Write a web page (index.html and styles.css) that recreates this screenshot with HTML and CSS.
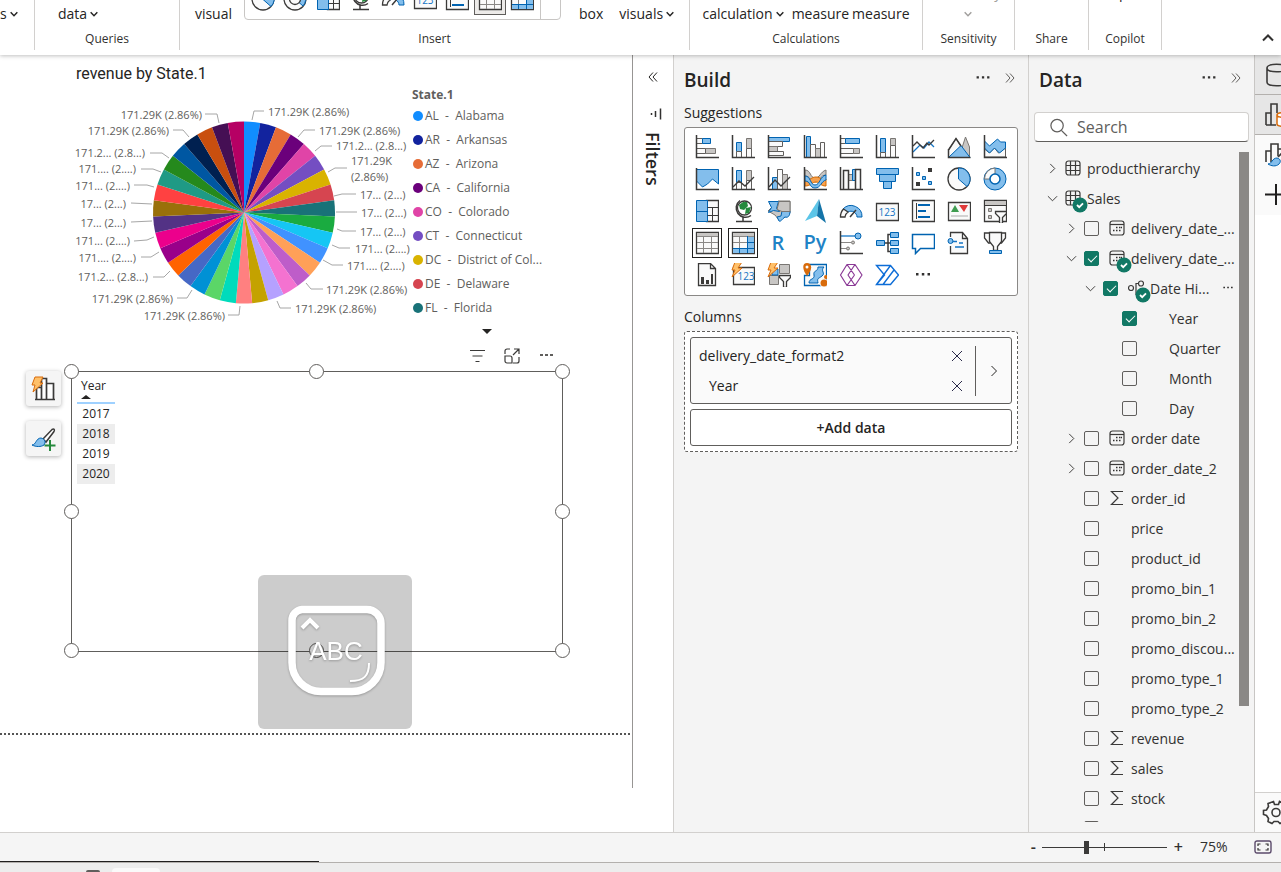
FILE: index.html
```html
<!DOCTYPE html>
<html lang="en">
<head>
<meta charset="utf-8">
<title>Report editor</title>
<link rel="stylesheet" href="styles.css">
</head>
<body>
<svg class="sprite" aria-hidden="true">
  <symbol id="i-sbar" viewBox="0 0 24 24"><path class="g" d="M10.5 13.5h10v5h-10z"/><path class="w" d="M1.500 13.500h9v5h-9zM1.500 3.500h6v5h-6z"/><path class="b" d="M7.500 3.500h8v5h-8z"/><path class="k" d="M1.500 0v22.500H24"/></symbol>
  <symbol id="i-scol" viewBox="0 0 24 24"><path class="b" d="M5.500 7.500h5v9h-5z"/><path class="g" d="M15.500 3.500h5v10h-5z"/><path class="w" d="M5.500 16.500h5v6h-5zM15.500 13.500h5v9h-5z"/><path class="k" d="M1.500 0v22.500H24"/></symbol>
  <symbol id="i-cbar" viewBox="0 0 24 24"><path class="b" d="M1.500 2.500h21v4h-21z"/><path class="w" d="M1.500 6.500h14v5h-14z"/><path class="g" d="M1.500 11.500h9v5h-9z"/><path class="w" d="M1.500 16.500h15v4h-15z"/><path class="k" d="M1.500 0v22.500H24"/></symbol>
  <symbol id="i-ccol" viewBox="0 0 24 24"><path class="b" d="M3.500 1.500h4v21h-4z"/><path class="w" d="M7.500 9.500h5v13h-5z"/><path class="g" d="M12.500 13.500h5v9h-5z"/><path class="w" d="M17.500 7.500h4v15h-4z"/><path class="k" d="M1.500 0v22.500H24"/></symbol>
  <symbol id="i-pbar" viewBox="0 0 24 24"><path class="w" d="M1.500 3.500h5v5h-5zM1.500 13.500h13v5h-13z"/><path class="b" d="M6.500 3.500h14v5h-14z"/><path class="g" d="M14.500 13.500h6v5h-6z"/><path class="k" d="M1.500 0v22.500H24"/></symbol>
  <symbol id="i-pcol" viewBox="0 0 24 24"><path class="b" d="M5.500 3.500h5v14h-5z"/><path class="g" d="M15.500 3.500h5v7h-5z"/><path class="w" d="M5.500 17.500h5v5h-5zM15.500 10.500h5v12h-5z"/><path class="k" d="M1.500 0v22.500H24"/></symbol>
  <symbol id="i-line" viewBox="0 0 24 24"><path class="bl" d="M2 17l7-7 4 3 5-6 5 5"/><path class="kl" d="M2 11l4-4 6 6 4-5 2 2 5-5"/><path class="k" d="M1.500 0v22.500H24"/></symbol>
  <symbol id="i-area" viewBox="0 0 24 24"><path class="g" d="M12 22L18.500 2l4 10v10z"/><path class="w" d="M1.500 15L9 3.500l9 14V22H1.500z"/><path class="b" d="M1.500 22.500L14 10.500l9 12z"/><path class="k" d="M1.500 14v8.500h22M1.500 15L9 3.500l5 7.500"/></symbol>
  <symbol id="i-sarea" viewBox="0 0 24 24"><path class="w" d="M1.500 14l5 4 5-5 4 5 7-5v9h-21z"/><path class="b" d="M1.500 6l5 5 8-7 3 3h5v6l-6 5-5-5-5 5-5-5z"/><path class="k" d="M1.500 0v22.500H24"/></symbol>
  <symbol id="i-parea" viewBox="0 0 24 24"><path class="b" d="M1.500 2.500h22V17l-6-5-5 5-5 3-6-6z"/><path class="k" d="M1.500 1v21.500H24"/></symbol>
  <symbol id="i-lscol" viewBox="0 0 24 24"><path class="b" d="M5.500 3.500h5v12h-5z"/><path class="g" d="M15.500 3.500h5v10h-5z"/><path class="w" d="M5.500 15.500h5v7h-5zM15.500 13.500h5v9h-5z"/><path class="kl" d="M2 20l6-6 6 5 9-9"/><path class="k" d="M1.500 0v22.500H24"/></symbol>
  <symbol id="i-lccol" viewBox="0 0 24 24"><path class="b" d="M5.500 10.500h5v12h-5z"/><path class="w" d="M10.500 2.500h5v20h-5z"/><path class="g" d="M15.500 7.500h5v15h-5z"/><path class="kl" d="M2 20l6-7 6 6 9-9"/><path class="k" d="M1.500 0v22.500H24"/></symbol>
  <symbol id="i-ribbon" viewBox="0 0 24 24"><path class="g" d="M2 3c6 0 5 8 10 8S17 5 23 3v5c-6 0-6 7-11 7S8 9 2 9z"/><path d="M2 13c7 0 6-3 11-3s5 4 10 2v7c-6 0-6-4-10-4s-5 4-11 4z" fill="#f6a04d" stroke="#d56a00"/><path class="b" d="M2 9c6 0 5 9 10 9S17 9 23 8v5c-5 1-5 8-11 8S8 14 2 14z"/><path class="k" d="M1.500 0v22.500H24"/></symbol>
  <symbol id="i-fall" viewBox="0 0 24 24"><path class="g" d="M9.500 7.500h4v6h-4z"/><path class="b" d="M13.500 2.500h3v11h-3z"/><path class="w" d="M4.500 3.500h5v19h-5zM16.500 2.500h5v20h-5z"/><path class="k" d="M1.500 0v22.500H24M16.500 22V2.500h5V22M4.500 22V3.500h5V22"/></symbol>
  <symbol id="i-funnel" viewBox="0 0 24 24"><path class="b" d="M1.500 1.500h22v6h-22zM4.500 7.500h16v7h-16zM8.500 14.500h8v7h-8z"/></symbol>
  <symbol id="i-scatter" viewBox="0 0 24 24"><path class="b" d="M5.500 5.500h3v3h-3zM11.500 9.500h3v3h-3zM17.500 14.500h3v3h-3z"/><path d="M17 1h4v4h-4zM5 15h4v4H5z" fill="#3b3a39"/><path class="k" d="M1.500 0v22.500H24"/></symbol>
  <symbol id="i-pie" viewBox="0 0 24 24"><circle class="wk" cx="12" cy="12" r="11"/><path class="b" d="M11.500 1v11l8.500 7.500A11 11 0 0 0 11.500 1z"/></symbol>
  <symbol id="i-donut" viewBox="0 0 24 24"><circle class="b" cx="12" cy="12" r="11"/><path class="wg" d="M12 1A11 11 0 0 0 1.500 12H7a5 5 0 0 1 5-5z"/><circle cx="12" cy="12" r="5" fill="#fff" stroke="#0063b1" stroke-width="1.500"/></symbol>
  <symbol id="i-donut2" viewBox="0 0 24 24"><circle class="wk" cx="12" cy="12" r="11"/><path class="b" d="M12 1a11 11 0 0 1 8 18l-4-3.500A5 5 0 0 0 12 7z"/><circle class="wk" cx="12" cy="12" r="5.500"/></symbol>
  <symbol id="i-tree" viewBox="0 0 24 24"><path class="wk" d="M11.500 1.500h12v21h-12z"/><path class="b" d="M1.500 1.500h11v21h-11zM1.500 12.500h11"/><path class="k1" d="M12.500 8.500h11M12.500 16.500h11M17.500 8.500v14"/></symbol>
  <symbol id="i-globe" viewBox="0 0 24 24"><circle cx="13.500" cy="9" r="7" fill="#fff" stroke="#3b3a39" stroke-width="1.300"/><path d="M8 6l4-3 4 0 1 4-4 4-4-1zM15 9l5-1-2 6-4 1z" fill="#258a3d"/><path class="k" d="M9 1.500A9 9 0 1 0 20 16.500M12 18v4M5 22.500h16"/></symbol>
  <symbol id="i-map" viewBox="0 0 24 24"><path class="g" d="M11 2h12v12l-5 4-6 3-4-5-7-4 5-5z"/><path class="b" d="M1.500 2.500h10l-2 7 3 3-6-1-5 2 3-5zM15 12l8 0c0 5-2 7-5 6-3 2-4 5-6 4l-2-4 4-1z"/><path class="g" d="M12 2.500h11v10h-8l-5-2z"/></symbol>
  <symbol id="i-arrow" viewBox="0 0 24 24"><path d="M16 0L2 22l12-5z" fill="#5cc5e8"/><path d="M16 0l7 24-9-7z" fill="#1474a8"/></symbol>
  <symbol id="i-gauge" viewBox="0 0 24 24"><path class="b" d="M4 10A11 11 0 0 1 23 18h-5a6 6 0 0 0-9-5z"/><path class="wk" d="M4.500 10A11 11 0 0 0 1.500 18H6a7 7 0 0 1 3-5z"/><path class="k" d="M11 18l6-7"/></symbol>
  <symbol id="i-card" viewBox="0 0 24 24"><path class="wk" d="M1.500 4.500h22v17h-22z"/><text x="12" y="17" text-anchor="middle" class="card-num">123</text></symbol>
  <symbol id="i-mcard" viewBox="0 0 24 24"><path class="wk" d="M1.500 1.500h22v21h-22z"/><path class="k1" d="M5.500 4v16"/><path stroke="#0063b1" stroke-width="2" d="M7 6h12M7 12h8M7 18h12"/></symbol>
  <symbol id="i-kpi" viewBox="0 0 24 24"><path class="wk" d="M1.500 3.500h22v18h-22z"/><path d="M4 13l4-7 4 7z" fill="#3f9c50"/><path d="M12 6h9l-4 7z" fill="#e03a3a"/><path d="M4 17h17" stroke="#aaa"/></symbol>
  <symbol id="i-slicer" viewBox="0 0 24 24"><path class="wk" d="M1.500 1.500h22v21h-22z"/><path d="M2 2h21v4H2z" fill="#c8c6c4"/><path class="k1" d="M2 6.500h21"/><path class="g" d="M5.500 9.500h3v3h-3zM5.500 16.500h3v3h-3z"/><path class="wk" d="M12.500 12.500h11v2l-4 4v6h-3v-6l-4-4z"/></symbol>
  <symbol id="i-table" viewBox="0 0 24 24"><path class="wk" d="M1.500 1.500h22v21h-22z"/><path d="M2 2h21v3H2z" fill="#c8c6c4"/><path class="gl" d="M2 5.500h21M2 11.500h21M2 17.500h21M8.500 5v17M16.500 5v17"/><path class="k1" d="M1.500 1.500h22v21h-22z"/></symbol>
  <symbol id="i-matrix" viewBox="0 0 24 24"><path class="wk" d="M1.500 1.500h22v21h-22z"/><path d="M2 2h21v3H2z" fill="#c8c6c4"/><path d="M16 5h7v17H2v-5h14z" fill="#83beec"/><path class="gl" d="M2 5.500h21M2 11.500h14M8.500 5v12M16.500 5"/><path d="M1.500 17.500h22M16.500 5v17M16 11.500h7M8.500 17v5" stroke="#0063b1"/><path class="k1" d="M1.500 22.500v-21h22v21z"/></symbol>
  <symbol id="i-r" viewBox="0 0 24 24"><text x="11" y="19" text-anchor="middle" class="lang">R</text></symbol>
  <symbol id="i-py" viewBox="0 0 24 24"><text x="12" y="18" text-anchor="middle" class="lang">Py</text></symbol>
  <symbol id="i-inf" viewBox="0 0 24 24"><path class="bl" d="M2 5h14"/><circle class="b" cx="19" cy="5" r="3"/><path class="gl" d="M2 11.500h10M2 17.500h6"/><circle class="g" cx="14" cy="11.500" r="1.500"/><circle class="g" cx="9" cy="17.500" r="1.500"/><path class="k" d="M1.500 0v22.500H24"/></symbol>
  <symbol id="i-decomp" viewBox="0 0 24 24"><path class="k" d="M9 12h6M15 3.500h-2v17h2"/><path class="b" d="M1.500 9.500h8v5h-8zM15.500 1.500h8v5h-8zM15.500 9.500h8v5h-8zM15.500 17.500h8v5h-8z"/></symbol>
  <symbol id="i-qa" viewBox="0 0 24 24"><path d="M1.500 3.500h22v14h-14l-5 5v-5h-3z" fill="#fff" stroke="#0063b1" stroke-width="1.500"/></symbol>
  <symbol id="i-narr" viewBox="0 0 24 24"><path class="wk" d="M3.500 6V1.500h12l5 6v15h-17V15M15.500 1.500v6h5"/><circle class="b" cx="3.500" cy="10" r="2.500"/><path class="bl" d="M6 10.500h4M8 16h9M12 12h4"/></symbol>
  <symbol id="i-trophy" viewBox="0 0 24 24"><path class="wk" d="M6.500 2H1.500v5l4 5h2M17.500 2h5v5l-4 5h-2"/><path class="wk" d="M6.500 1.500h12v9l-4 5v4h-4v-4l-4-5z"/><path class="b" d="M6.500 19.500h12v3h-12z"/></symbol>
  <symbol id="i-prep" viewBox="0 0 24 24"><path class="wk" d="M3.500 0.500h12l5 5v17h-17zM15.500 0.500v5h5"/><path d="M6 14h3v7H6zM11 17h3v4h-3zM16 11h2v10h-2z" fill="#3b3a39"/></symbol>
  <symbol id="i-card2" viewBox="0 0 24 24"><path class="wk" d="M2.500 4.500h21v17h-21z"/><text x="15" y="17" text-anchor="middle" class="card-num">123</text><path class="bolt" d="M4-1h7L7 5h4L1 14l3-7H1z"/></symbol>
  <symbol id="i-slicer2" viewBox="0 0 24 24"><path class="g" d="M12.500 1.500h10v9h-10zM2.500 12.500h9v9h-9z"/><path class="b" d="M5 6h6v6H5z"/><path class="bolt" d="M4-1h7L7 5h4L1 14l3-7H1z"/><path class="wk" d="M12.500 12.500h11v2l-4 4v6h-3v-6l-4-4z"/></symbol>
  <symbol id="i-azmap" viewBox="0 0 24 24"><path class="wb" d="M1.500 22.500v-10h5v-11h17v21z"/><path d="M15 4h6c-4 4 2 6-2 9s-5 2-4 7H6c0-5 6-3 5-8s4-3 4-8z" fill="#83beec" stroke="#0063b1"/><path d="M4 13C-1 6-1 0 4 0s6 6 0 13z" fill="#d86b0b"/><circle cx="4" cy="4" r="1.500" fill="#fff"/><circle cx="21" cy="20" r="4.500" fill="#fff"/><circle cx="21" cy="20" r="3.500" fill="#d86b0b"/><circle cx="23" cy="14" r="2" fill="#d86b0b"/></symbol>
  <symbol id="i-apps" viewBox="0 0 24 24"><path d="M8 1.500h8l7 10.500-7 10.500H8L1.500 12zM8 1.500l7.500 10.500M16 1.500L9 12l7 10.500M8 22.500L15.500 12" fill="none" stroke="#8b3a96" stroke-width="1.200" stroke-linejoin="round"/></symbol>
  <symbol id="i-flow" viewBox="0 0 24 24"><path d="M1.500 2.500h14l8 9.500-8 9.500h-14l8-9.500zM15.500 2.500l-14 19M19 7L8 21.500" fill="none" stroke="#0d6dd7" stroke-width="1.400"/></symbol>
  <symbol id="i-dots" viewBox="0 0 24 24"><path d="M5 10h2.500v2.500H5zM10.800 10h2.500v2.500h-2.500zM16.500 10H19v2.500h-2.500z" fill="#323130"/></symbol>
  <symbol id="i-down" viewBox="0 0 12 12"><path d="M1 3.500l5 5 5-5" fill="none" stroke="currentColor"/></symbol>
  <symbol id="i-downb" viewBox="0 0 12 12"><path d="M1 3.500l5 5 5-5" fill="none" stroke="currentColor" stroke-width="2.200"/></symbol>
  <symbol id="i-right" viewBox="0 0 12 12"><path d="M3.500 1l5 5-5 5" fill="none" stroke="currentColor"/></symbol>
  <symbol id="i-close" viewBox="0 0 12 12"><path d="M1 1l10 10M11 1L1 11" fill="none" stroke="#2b2b4a"/></symbol>
  <symbol id="i-dbl" viewBox="0 0 12 12"><path d="M2 1.500L6 6l-4 4.500M6 1.500L10 6l-4 4.500" fill="none" stroke="currentColor"/></symbol>
  <symbol id="i-grid" viewBox="0 0 16 16"><rect x="1" y="1" width="14" height="14" rx="2.500" class="ol"/><path class="ol" d="M1 5.500h14M1 10.500h14M5.500 1v14M10.500 1v14"/></symbol>
  <symbol id="i-cal" viewBox="0 0 16 16"><rect x="1" y="1" width="14" height="14" rx="2.500" class="ol"/><path class="ol" d="M1 4.500h14"/><path d="M7 7.500h1.500M10 7.500h1.500M13 7.500h-1M4 10.500h1.500M7 10.500h1.500M10 10.500h1.500" stroke="#323130" stroke-width="1.400"/></symbol>
  <symbol id="i-hier" viewBox="0 0 16 16"><circle class="ol" cx="3" cy="8" r="2.500"/><circle class="ol" cx="13" cy="3.500" r="2.500"/><path class="ol" d="M10.500 3.500H8v11h3"/></symbol>
  <symbol id="i-sum" viewBox="0 0 16 16"><path class="ol" d="M14 1.500H2.500L9 8l-6.500 6.500H14"/></symbol>
  <symbol id="i-ok" viewBox="0 0 16 16"><circle cx="8" cy="8" r="7.500" fill="#117865"/><path d="M5 8l2.200 2.200L11 6.300" fill="none" stroke="#fff" stroke-width="1.800"/></symbol>
</svg>

<header class="ribbon">
  <section class="group"><div class="cmds"><button>s<svg class="chev"><use href="#i-downb"/></svg></button></div><div class="cap">&nbsp;</div></section>
  <section class="group"><div class="cmds"><button>data<svg class="chev"><use href="#i-downb"/></svg></button></div><div class="cap">Queries</div></section>
  <section class="group insert">
    <div class="cmds">
      <button>visual</button>
      <div class="gallery">
        <button aria-label="Pie"><svg class="ico"><use href="#i-pie"/></svg></button>
        <button aria-label="Donut"><svg class="ico"><use href="#i-donut2"/></svg></button>
        <button aria-label="Treemap"><svg class="ico"><use href="#i-tree"/></svg></button>
        <button aria-label="Map"><svg class="ico"><use href="#i-globe"/></svg></button>
        <button aria-label="Gauge"><svg class="ico"><use href="#i-gauge"/></svg></button>
        <button aria-label="Card"><svg class="ico"><use href="#i-card"/></svg></button>
        <button aria-label="Multi-row card"><svg class="ico"><use href="#i-mcard"/></svg></button>
        <button class="on" aria-label="Table"><svg class="ico"><use href="#i-table"/></svg></button>
        <button aria-label="Matrix"><svg class="ico"><use href="#i-matrix"/></svg></button>
      </div>
      <button class="box">box</button>
      <button>visuals<svg class="chev"><use href="#i-downb"/></svg></button>
    </div>
    <div class="cap">Insert</div>
  </section>
  <section class="group"><div class="cmds calc"><button>calculation<svg class="chev"><use href="#i-downb"/></svg></button><button>measure</button><button>measure</button></div><div class="cap">Calculations</div></section>
  <section class="group"><div class="cmds"><button class="tall off">Sensitivity<svg class="chev"><use href="#i-downb"/></svg></button></div><div class="cap">Sensitivity</div></section>
  <section class="group"><div class="cap">Share</div></section>
  <section class="group"><div class="cmds"><button class="tall">Copilot<span class="chev"></span></button></div><div class="cap">Copilot</div></section>
  <button class="collapse" aria-label="Collapse ribbon"><svg viewBox="0 0 12 12"><path d="M1 8.500l5-5 5 5" fill="none" stroke="#323130" stroke-width="2"/></svg></button>
</header>

<main class="work">
  <section class="report">
    <div class="page">
      <article class="pie">
        <h2>revenue by State.1</h2>
        <svg class="chart" viewBox="76 100 332 226" role="img" aria-label="Pie chart of revenue by State.1">
          <g id="slices"></g><g id="leaders"></g><g id="labels"></g>
        </svg>
        <div class="legend">
          <h3>State.1</h3>
          <ul>
            <li class="c1">AL  -  Alabama</li><li class="c2">AR  -  Arkansas</li><li class="c3">AZ  -  Arizona</li>
            <li class="c4">CA  -  California</li><li class="c5">CO  -  Colorado</li><li class="c6">CT  -  Connecticut</li>
            <li class="c7">DC  -  District of Col...</li><li class="c8">DE  -  Delaware</li><li class="c9">FL  -  Florida</li>
          </ul>
          <button class="more" aria-label="Next legend items"></button>
        </div>
      </article>

      <div class="vis-tools">
        <button aria-label="Filters"><svg viewBox="0 0 16 16"><path class="ol" d="M1 2.500h15M3.500 8h10M6.500 13.500h4"/></svg></button>
        <button aria-label="Focus mode"><svg viewBox="0 0 16 16"><path class="ol" d="M6 1H3a2 2 0 0 0-2 2v3M10 1h5v5M15 1L9 7M15 9v4a2 2 0 0 1-2 2H9M1 8h5a2 2 0 0 1 2 2v5H3a2 2 0 0 1-2-2z"/></svg></button>
        <button aria-label="More options"><svg viewBox="0 0 16 16"><path d="M1 6h3v2H1zM6 6h3v2H6zM11 6h3v2h-3z" fill="#605e5c"/></svg></button>
      </div>
      <div class="side-tools">
        <button aria-label="Build visual"><svg viewBox="0 0 26 26"><path d="M5.500 23.500v-12h5v12M10.500 23.500V2.500h5v21M15.500 23.500v-16h7v16M4 23.500h20" fill="#fff" stroke="#3b3a39" stroke-width="1.700"/><path class="bolt" d="M4 1h8L9 7h3L2 16l2-7H1z"/></svg></button>
        <button aria-label="Format visual"><svg viewBox="0 0 26 26"><path d="M12 13L21 3.500c2-1 3 0 2 2L15 16z" fill="#fff" stroke="#3b3a39" stroke-width="1.500"/><path class="b" d="M1 19c4 0 4-7 9-7 4 1 5 4 3 7-3 2-8 2-12 0z"/><path d="M19 14v11M13.500 19.500h11" stroke="#258a3d" stroke-width="2"/></svg></button>
      </div>

      <article class="matrix">
        <table>
          <thead><tr><th>Year<i class="up"></i></th></tr></thead>
          <tbody><tr><td>2017</td></tr><tr><td>2018</td></tr><tr><td>2019</td></tr><tr><td>2020</td></tr></tbody>
        </table>
        <i class="h tl"></i><i class="h tc"></i><i class="h tr"></i><i class="h ml"></i><i class="h mr"></i><i class="h bl-h"></i><i class="h bc"></i><i class="h br"></i>
      </article>

      <div class="osd">
        <svg viewBox="0 0 154 154" role="img" aria-label="Caps lock indicator">
          <g class="shade"><path d="M44 34.500h65a14 14 0 0 1 14 14v39a29 29 0 0 1-29 29H63a29 29 0 0 1-29-29v-42a11 11 0 0 1 10-11z" stroke-width="7.500"/><path d="M44 53l8-8 8 8" stroke-width="4"/><path d="M111 88c0 13-5 18-19 18" stroke-width="2"/></g>
          <text x="78" y="85" text-anchor="middle">ABC</text>
        </svg>
      </div>
    </div>
  </section>

  <aside class="filters">
    <button aria-label="Expand filters"><svg class="dbl flip"><use href="#i-dbl"/></svg></button>
    <svg class="fico" viewBox="0 0 12 12"><path d="M1.500 5v2M5.500 3v6M10.500 .5v11" stroke="#323130" stroke-width="1.500"/></svg>
    <h2>Filters</h2>
  </aside>

  <aside class="build">
    <div class="head"><h1>Build</h1><button aria-label="More"><svg class="ell"><use href="#i-dots"/></svg></button><button aria-label="Collapse"><svg class="dbl"><use href="#i-dbl"/></svg></button></div>
    <h2>Suggestions</h2>
    <div class="types" id="types"></div>
    <h2 class="second">Columns</h2>
    <div class="well">
      <div class="field">
        <div class="names">
          <div><span>delivery_date_format2</span><button aria-label="Remove delivery_date_format2"><svg class="x"><use href="#i-close"/></svg></button></div>
          <div class="sub"><span>Year</span><button aria-label="Remove Year"><svg class="x"><use href="#i-close"/></svg></button></div>
        </div>
        <button class="open" aria-label="Field options"><svg class="x"><use href="#i-right"/></svg></button>
      </div>
      <button class="add">+Add data</button>
    </div>
  </aside>

  <aside class="data">
    <div class="head"><h1>Data</h1><button aria-label="More"><svg class="ell"><use href="#i-dots"/></svg></button><button aria-label="Collapse"><svg class="dbl"><use href="#i-dbl"/></svg></button></div>
    <label class="search"><svg viewBox="0 0 20 20"><circle cx="8.500" cy="8" r="6.500" fill="none" stroke="#605e5c" stroke-width="1.300"/><path d="M13 13l6 6" stroke="#605e5c" stroke-width="1.300"/></svg><input type="text" placeholder="Search" aria-label="Search"></label>
    <div class="scroll">
      <ul class="tree" id="tree"></ul>
      <div class="bar"></div>
    </div>
  </aside>

  <nav class="rail">
    <button class="on" aria-label="Data"><svg viewBox="0 0 24 24"><path class="ol2" d="M2 5v14c0 5 19 5 19 0V5c0-5-19-5-19 0c0 5 19 5 19 0"/></svg></button>
    <button class="on" aria-label="Build"><svg viewBox="0 0 24 24"><path class="ol2" d="M1 22V10h5V1h6v9M1 22h10M6 22V10"/><path d="M12 12v9c0 3 12 3 12 0v-9c0-3-12-3-12 0c0 3 12 3 12 0" fill="#fff" stroke="#d86b0b" stroke-width="1.500"/></svg></button>
    <button aria-label="Format"><svg viewBox="0 0 24 24"><path class="ol2" d="M1 19V8h5v11M6 8V1h7v12M13 6h5"/><path class="b" d="M3 21c4 0 4-6 9-6 4 1 4 4 2 6-3 3-8 2-11 0z"/><path class="ol2" d="M13 14l8-8"/></svg></button>
    <button aria-label="Add"><svg viewBox="0 0 24 24"><path d="M11 1v21M0 11.500h24" stroke="#201f1e" stroke-width="2"/></svg></button>
    <button class="gear" aria-label="Settings"><svg viewBox="0 0 26 26"><path class="ol2" d="M10.500 1.500l1 3h4l1-3 4 2-.500 3 2.500 3.500 3 .500v4l-3 1-2 3 .500 3-4 2-2-2h-4l-2 2-4-2 .500-3-2-3-3-1v-4l3-.500 2-3.500-.500-3z"/><circle class="ol2" cx="13" cy="12.500" r="4"/></svg></button>
  </nav>
</main>

<footer class="status">
  <button aria-label="Zoom out">-</button>
  <div class="zoom"><input type="range" min="0" max="100" value="35" aria-label="Zoom"></div>
  <button aria-label="Zoom in">+</button>
  <output>75%</output>
  <button class="fit" aria-label="Fit to page"><svg viewBox="0 0 18 14"><rect x="1" y="1" width="16" height="12" rx="2" fill="none" stroke="#5b4a6b" stroke-width="1.400"/><path d="M4 6V4h2.500M11.500 4H14v2M14 8v2h-2.500M6.500 10H4V8" fill="none" stroke="#323130" stroke-width="1.200"/></svg></button>
</footer>
<div class="taskbar"><i class="avatar"></i><i class="tab"></i></div>
<script src="app.js"></script>
</body>
</html>
```
FILE: styles.css
```css
* { box-sizing: border-box; }
body { margin: 0; height: 100vh; display: flex; flex-direction: column; overflow: hidden; background: #fff; color: #252423; font: 14px/20px "Open Sans", "Noto Sans", sans-serif; }
h1, h2, h3, ul { margin: 0; padding: 0; font-weight: 400; list-style: none; }
button { margin: 0; padding: 0; border: 0; background: none; color: inherit; font: inherit; display: flex; align-items: center; }
svg { display: block; flex: none; overflow: visible; }
.sprite { display: none; }

/* icon paint */
.k { fill: none; stroke: #3b3a39; stroke-width: 1.5; }
.k1 { fill: none; stroke: #3b3a39; }
.kl { fill: none; stroke: #3b3a39; stroke-width: 1.3; }
.bl { fill: none; stroke: #1474c4; stroke-width: 1.3; }
.gl { fill: none; stroke: #8a8886; }
.b { fill: #83beec; stroke: #0063b1; }
.g { fill: #c8c6c4; stroke: #797673; }
.w { fill: #fafafa; stroke: #605e5c; }
.wk { fill: #fafafa; stroke: #3b3a39; stroke-width: 1.3; }
.wg { fill: #fafafa; stroke: #797673; }
.wb { fill: #fafafa; stroke: #0063b1; stroke-width: 1.3; }
.bolt { fill: #ffc069; stroke: #d86b0b; }
.ol { fill: none; stroke: #3b3a39; stroke-width: 1.2; }
.ol2 { fill: none; stroke: #3b3a39; stroke-width: 1.6; }
.card-num { font: 10px "Open Sans", sans-serif; fill: #1474c4; }
.lang { font: 600 20px "Open Sans", sans-serif; fill: #1f83c6; }
.ico { width: 24px; height: 24px; }
.chev { width: 8px; height: 8px; margin-left: 3px; }
.x { width: 12px; height: 12px; }
.dbl { width: 12px; height: 12px; color: #605e5c; }
.flip { transform: scaleX(-1); color: #252423; }
.ell { width: 22px; height: 22px; }

/* ribbon */
.ribbon { flex: none; height: 55px; display: grid; grid-template-columns: 35px 145px 510px 233px 92px 74px 73px 1fr; background: #fff; overflow: hidden; box-shadow: 0 1px 4px rgba(0,0,0,.25); z-index: 2; }
.group { display: flex; flex-direction: column; justify-content: flex-end; align-items: center; height: 50px; border-right: 1px solid #d2d0ce; }
.cmds { display: flex; align-items: flex-end; justify-content: center; }
.group:first-child .cmds { align-self: flex-start; }
.group:nth-child(2) .cmds { margin-right: 58px; }
.cap { font-size: 12px; line-height: 18px; margin: 6px 0 2px; color: #323130; }
.insert .cmds { gap: 12px; align-self: stretch; }
.insert .box { margin: 0 4px 0 6px; }
.gallery { display: flex; justify-content: space-between; align-items: flex-end; height: 60px; width: 317px; padding: 0 22px 4px 2px; margin-bottom: 4px; border: 1px solid #c8c6c4; border-radius: 4px; background: linear-gradient(90deg, transparent 295px, #c8c6c4 295px, #c8c6c4 296px, transparent 296px); }
.gallery button { padding: 3px; border: 1px solid transparent; }
.gallery .on { background: #edebe9; border-color: #605e5c; }
.calc { gap: 3px; }
.calc button:first-child { margin-right: 5px; }
.tall { flex-direction: column; gap: 9px; line-height: 16px; padding-bottom: 6px; }
.tall .chev { margin: 0; }
.off { color: #a19f9d; }
.collapse { justify-self: end; align-self: end; width: 12px; margin: 0 7px 11px 0; }

/* work area */
.work { flex: 1; min-height: 0; display: flex; }
.report { flex: 1; min-width: 0; padding-bottom: 44px; }
.page { position: relative; height: 100%; border-right: 1px solid #979593; }
.page::after { content: ""; position: absolute; left: 0; right: 2px; top: 678px; border-top: 2px dotted #555; }
.pie { position: absolute; left: 76px; top: 9px; display: grid; grid-template-columns: 332px 150px; column-gap: 4px; }
.pie h2 { grid-column: 1 / 3; font: 400 16px/20px Roboto, sans-serif; color: #252423; }
.chart { width: 332px; height: 226px; margin-top: 16px; font-size: 11px; }
.chart text { fill: #605e5c; }
.chart polyline { fill: none; stroke: #a6a6a6; }
.legend { color: #605e5c; font-size: 12px; }
.legend h3 { font-weight: 700; font-size: 12px; line-height: 20px; margin-top: 1px; }
.legend ul { margin: -1px 0 9px; }
.legend li { display: flex; align-items: center; gap: 2px; height: 24px; white-space: pre; }
.legend li::before { content: ""; width: 10px; height: 10px; margin-left: 1px; border-radius: 50%; background: currentColor; }
.legend .c1::before { background: #118dff; }
.legend .c2::before { background: #12239e; }
.legend .c3::before { background: #e66c37; }
.legend .c4::before { background: #6b007b; }
.legend .c5::before { background: #e044a7; }
.legend .c6::before { background: #744ec2; }
.legend .c7::before { background: #d9b300; }
.legend .c8::before { background: #d64550; }
.legend .c9::before { background: #197278; }
.more { margin: 0 auto; border: 5px solid transparent; border-top-color: #252423; border-bottom: 0; }

.vis-tools { position: absolute; left: 469px; top: 293px; display: flex; gap: 19px; }
.vis-tools svg { width: 16px; height: 16px; }
.side-tools { position: absolute; left: 26px; top: 316px; display: grid; gap: 15px; }
.side-tools button { width: 35px; height: 35px; justify-content: center; border-radius: 3px; background: #f5f5f5; box-shadow: 0 1px 4px rgba(0,0,0,.3); }
.side-tools svg { width: 26px; height: 26px; }

.matrix { position: absolute; left: 71px; top: 316px; width: 492px; height: 281px; padding: 5px; border: 1px solid #605e5c; }
.matrix table { border-collapse: collapse; font-size: 12px; line-height: 20px; }
.matrix th { width: 38px; padding: 0 4px; font-weight: 400; text-align: left; line-height: 18px; border-bottom: 2px solid #9fd1ff; }
.up { display: block; width: 10px; margin-bottom: 3px; border: 5px solid transparent; border-bottom: 4px solid #252423; border-top: 0; }
.matrix td { padding: 0; text-align: center; }
.matrix tr:nth-child(even) td { background: #ededed; }
.h { position: absolute; width: 15px; height: 15px; margin: -8px; border: 1px solid #605e5c; border-radius: 50%; background: #fff; }
.tl { left: 0; top: 0; } .tc { left: 50%; top: 0; } .tr { left: 100%; top: 0; }
.ml { left: 0; top: 50%; } .mr { left: 100%; top: 50%; }
.bl-h { left: 0; top: 100%; } .bc { left: 50%; top: 100%; } .br { left: 100%; top: 100%; }
.tr, .mr, .br { margin-left: -7px; }

.osd { position: absolute; left: 258px; top: 520px; width: 154px; height: 154px; border-radius: 6px; background: rgba(0,0,0,.2); }
.shade { fill: none; stroke: #fff; filter: drop-shadow(0 1px 1px rgba(0,0,0,.25)); }
.osd text { font: 26px "Liberation Sans", Arial, sans-serif; fill: #fff; filter: drop-shadow(0 1px 1px rgba(0,0,0,.25)); }

.filters { width: 40px; display: flex; flex-direction: column; align-items: center; padding-top: 16px; }
.fico { width: 12px; height: 12px; margin: 25px 0 0 6px; }
.filters h2 { writing-mode: vertical-rl; margin-top: 12px; font-size: 18px; line-height: 20px; font-weight: 600; }

.build, .data { background: #f4f4f4; border-left: 1px solid #d2d0ce; }
.build { width: 355px; padding: 12px 10px; }
.data { width: 226px; padding: 12px 5px 10px; display: flex; flex-direction: column; }
.head { display: flex; align-items: center; gap: 10px; height: 26px; }
.head h1 { flex: 1; font-size: 19px; line-height: 26px; font-weight: 600; }
.head button { margin-top: -5px; }
.build .head { padding-right: 2px; }
.data .head { padding: 0 7px 0 5px; }
.build h2 { font-size: 14px; line-height: 20px; margin: 10px 0 4px; }
.build .second { margin: 11px 0 4px; }
.types { display: grid; grid-template-columns: repeat(9, 36px); grid-auto-rows: 32px; padding: 4px; height: 169px; border: 1px solid #8a8886; border-radius: 3px; background: #fff; align-content: start; }
.types button { justify-content: center; width: 30px; height: 30px; margin: 0 3px; border: 1px solid transparent; }
.types .on { border-color: #201f1e; }
.well { padding: 5px; border: 1px dashed #605e5c; border-radius: 3px; background: #fff; display: grid; gap: 5px; }
.field { display: flex; align-items: center; padding: 3px 0 2px; border: 1px solid #605e5c; border-radius: 3px; background: #fafafa; }
.names { flex: 1; }
.names div { display: flex; align-items: center; justify-content: space-between; height: 30px; padding: 0 12px 0 8px; }
.names .sub { padding-left: 18px; }
.open { width: 36px; height: 50px; justify-content: center; border-left: 1px solid #605e5c; }
.add { justify-content: center; height: 37px; border: 1px solid #605e5c; border-radius: 3px; background: #fff; font-weight: 600; }

.search { flex: none; display: flex; align-items: center; gap: 9px; height: 30px; margin: 19px 0 10px; padding: 0 14px; border: 1px solid #d2d0ce; border-bottom-color: #605e5c; border-radius: 4px; background: #fff; }
.search svg { width: 19px; height: 19px; }
.search input { min-width: 0; flex: 1; padding: 0; border: 0; outline: 0; background: none; font: 16px/20px "Open Sans", sans-serif; color: #252423; }
.search input::placeholder { color: #605e5c; }
.scroll { flex: 1; min-height: 0; display: flex; }
.tree { flex: 1; min-width: 0; overflow: hidden; padding-top: 1px; }
.bar { width: 10px; height: 554px; background: #8a8886; }
.tree li { display: flex; align-items: center; height: 30px; padding-left: 11px; color: #323130; white-space: nowrap; }
.tree .l1 { padding-left: 30px; } .tree .l2 { padding-left: 49px; } .tree .l3 { padding-left: 68px; }
.tree label { display: flex; align-items: center; }
.txt { padding-top: 1px; }
.exp { width: 15px; height: 12px; margin-right: 5px; justify-content: center; }
.exp svg { width: 11px; height: 11px; }
.tree input { appearance: none; flex: none; position: relative; width: 15px; height: 15px; margin: 0 10px 0 0; border: 1px solid #605e5c; border-radius: 2px; }
.tree input:checked { background: #117865; border-color: #117865; }
.tree input:checked::after { content: ""; position: absolute; left: 3px; top: 3px; width: 8px; height: 4px; border: solid #fff; border-width: 0 0 1px 1px; transform: rotate(-45deg); }
.ti { position: relative; flex: none; width: 16px; height: 16px; margin-right: 6px; }
.ti svg { width: 16px; height: 16px; }
.ti .ok { position: absolute; left: 7px; top: 7px; }
.rowmore { margin-left: auto; padding-right: 3px; }
.rowmore svg { width: 16px; height: 16px; }

.rail { width: 27px; display: flex; flex-direction: column; border-left: 1px solid #c8c6c4; overflow: hidden; }
.rail button { flex: none; height: 40px; padding-left: 10px; background: #fafafa; }
.rail .on { background: #e6e6e6; border-bottom: 1px solid #b3b0ad; }
.rail svg { width: 24px; height: 24px; }
.rail .gear { margin-top: auto; padding-left: 8px; border-top: 1px solid #d2d0ce; }
.rail .gear svg { width: 26px; height: 26px; }

.status { flex: none; height: 30px; display: flex; align-items: center; justify-content: flex-end; padding: 0 9px 1px 0; background: linear-gradient(#201f1e, #201f1e) 0 100% / 319px 1px no-repeat #f5f5f5; border-top: 1px solid #d2d0ce; color: #323130; }
.status button { font-size: 16px; font-weight: 600; }
.zoom { width: 125px; margin: 0 7px 0 6px; background: linear-gradient(#3b3a39, #3b3a39) 62px 50% / 1px 8px no-repeat; }
.zoom input { display: block; appearance: none; width: 100%; height: 14px; margin: 0; background: linear-gradient(#3b3a39, #3b3a39) 0 50% / 100% 1px no-repeat; }
.zoom input::-webkit-slider-thumb { appearance: none; width: 5px; height: 13px; background: #3b3a39; }
.status output { width: 30px; margin: 0 24px 0 17px; }
.fit svg { width: 18px; height: 14px; }
.taskbar { flex: none; height: 10px; display: flex; align-items: flex-end; padding-left: 86px; border-top: 1px solid #b3b0ad; background: #ededed; }
.avatar { width: 14px; height: 2px; border-radius: 7px 7px 0 0; background: #605e5c; }
.tab { width: 48px; height: 4px; margin-left: 12px; border-radius: 4px 4px 0 0; background: #fafafa; }
```
FILE: app.js
```js
const NS = "http://www.w3.org/2000/svg";
const add = (parent, tag, attrs, text) => {
  const el = document.createElementNS(NS, tag);
  for (const k in attrs) el.setAttribute(k, attrs[k]);
  if (text) el.textContent = text;
  document.getElementById(parent).append(el);
};

const colors = "118DFF 12239E E66C37 6B007B E044A7 744EC2 D9B300 D64550 197278 1AAB40 15C6F4 4092FF FFA058 BE5DC9 F472D0 B5A1FF C4A200 FF8080 00DBBC 5BD667 0091D5 4668C5 FF6300 99008A EC008C 533285 99700A FF4141 1F9A85 25891C 0057A2 002050 C94F0F 450F54 B60064".split(" ");
const cx = 244, cy = 212.5, r = 91, step = 2 * Math.PI / colors.length;
const at = i => `${cx + r * Math.sin(i * step)} ${cy - r * Math.cos(i * step)}`;
colors.forEach((c, i) => add("slices", "path", { d: `M${cx} ${cy}L${at(i)}A${r} ${r} 0 0 1 ${at(i + 1)}z`, fill: "#" + c }));

[
  "252,120 254,111 264,111", "298,137 304,130 315,130", "315,151 321,146 332,146", "328,172 335,168 347,168",
  "334,196 342,194 356,194", "336,212 357,212", "337,229 342,231 356,231", "332,245 339,248 350,248",
  "323,260 332,265 343,265", "306,283 311,289 323,289", "277,301 280,308 291,308",
  "205,114 217,114 219,123", "173,130 183,130 189,137", "150,153 162,153 169,158", "141,169 153,169 161,172",
  "134,185 147,185 154,187", "131,203 152,204", "131,222 152,221", "134,241 147,240 154,237",
  "141,257 151,257 159,252", "153,277 164,277 170,271", "177,298 187,298 192,290", "228,315 239,315 240,306"
].forEach(points => add("leaders", "polyline", { points }));

const full = "171.29K (2.86%)", a = "171.2... (2.8...)", b = "171.... (2....)", c = "171... (2....)", d = "17... (2...)";
[[268, 116, full], [319, 135, full], [336, 150, a], [351, 165, "171.29K"], [351, 181, "(2.86%)"], [360, 199, d], [361, 217, d],
 [360, 236, d], [355, 253, c], [347, 270, b], [326, 294, full], [295, 313, full]
].forEach(([x, y, t]) => add("labels", "text", { x, y }, t));
[[202, 119, full], [169, 135, full], [145, 157, a], [136, 173, b], [130, 190, c], [126, 208, d], [126, 227, d],
 [130, 245, c], [136, 262, b], [148, 281, a], [173, 303, full], [225, 320, full]
].forEach(([x, y, t]) => add("labels", "text", { x, y, "text-anchor": "end" }, t));

const use = (id, cls = "") => `<svg class="${cls}"><use href="#i-${id}"/></svg>`;
const types = "sbar scol cbar ccol pbar pcol line area sarea parea lscol lccol ribbon fall funnel scatter pie donut tree globe map arrow gauge card mcard kpi slicer table matrix r py inf decomp qa narr trophy prep card2 slicer2 azmap apps flow dots".split(" ");
document.getElementById("types").innerHTML = types.map(t =>
  `<button aria-label="${t}" class="${t === "table" || t === "matrix" ? "on" : ""}">${use(t, "ico")}</button>`).join("");

/* level, expander, checkbox (null = none), icon, badge, text */
const rows = [
  [0, "right", null, "grid", 0, "producthierarchy"], [0, "down", null, "grid", 1, "Sales"],
  [1, "right", 0, "cal", 0, "delivery_date_..."], [1, "down", 1, "cal", 1, "delivery_date_..."],
  [2, "down", 1, "hier", 1, "Date Hi..."],
  [3, "", 1, "", 0, "Year"], [3, "", 0, "", 0, "Quarter"], [3, "", 0, "", 0, "Month"], [3, "", 0, "", 0, "Day"],
  [1, "right", 0, "cal", 0, "order date"], [1, "right", 0, "cal", 0, "order_date_2"], [1, "", 0, "sum", 0, "order_id"],
  [1, "", 0, "", 0, "price"], [1, "", 0, "", 0, "product_id"], [1, "", 0, "", 0, "promo_bin_1"], [1, "", 0, "", 0, "promo_bin_2"],
  [1, "", 0, "", 0, "promo_discou..."], [1, "", 0, "", 0, "promo_type_1"], [1, "", 0, "", 0, "promo_type_2"],
  [1, "", 0, "sum", 0, "revenue"], [1, "", 0, "sum", 0, "sales"], [1, "", 0, "sum", 0, "stock"], [1, "", 0, "", 0, ""]
];
document.getElementById("tree").innerHTML = rows.map(([lv, ex, ck, ic, ok, t]) =>
  `<li class="l${lv}">` +
  (ex ? `<button class="exp" aria-label="Toggle ${t}">${use(ex)}</button>` : `<span class="exp"></span>`) +
  `<label>${ck === null ? "" : `<input type="checkbox" ${ck ? "checked" : ""}>`}` +
  `<span class="ti">${ic ? use(ic) : ""}${ok ? use("ok", "ok") : ""}</span><span class="txt">${t}</span></label>` +
  (lv === 2 ? `<button class="rowmore" aria-label="More options">${use("dots")}</button>` : "") + `</li>`).join("");
```
